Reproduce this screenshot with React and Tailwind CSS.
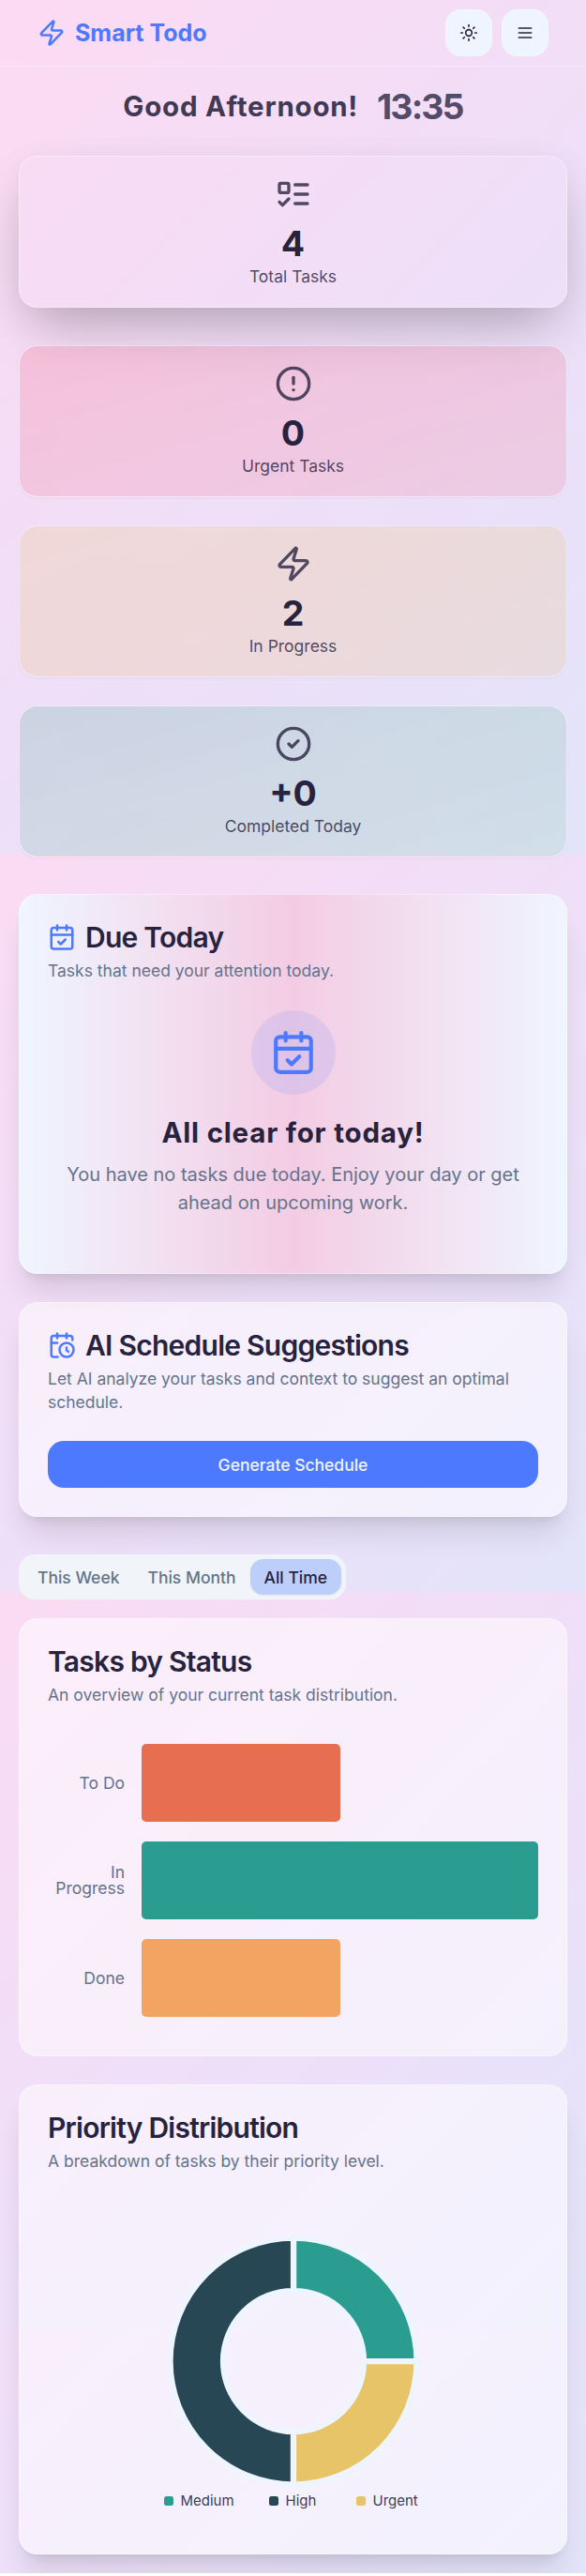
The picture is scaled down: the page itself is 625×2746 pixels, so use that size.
import { Zap, Sun, CircleAlert, CircleCheck, CalendarCheck } from "lucide-react";

function Stroke({ size, className, children }) {
  return (
    <svg
      width={size}
      height={size}
      viewBox="0 0 24 24"
      fill="none"
      stroke="currentColor"
      strokeWidth="2"
      strokeLinecap="round"
      strokeLinejoin="round"
      className={className}
    >
      {children}
    </svg>
  );
}

function ListTodo(props) {
  return (
    <Stroke {...props}>
      <rect x="3" y="5" width="6" height="6" rx="1" />
      <path d="m3 17 2 2 4-4" />
      <path d="M13 6h8" />
      <path d="M13 12h8" />
      <path d="M13 18h8" />
    </Stroke>
  );
}

function MenuIcon(props) {
  return (
    <Stroke {...props}>
      <path d="M4 12h16" />
      <path d="M4 6h16" />
      <path d="M4 18h16" />
    </Stroke>
  );
}

function CalendarClock(props) {
  return (
    <Stroke {...props}>
      <path d="M21 7.5V6a2 2 0 0 0-2-2H5a2 2 0 0 0-2 2v14a2 2 0 0 0 2 2h3.5" />
      <path d="M16 2v4" />
      <path d="M8 2v4" />
      <path d="M3 10h5" />
      <path d="M17.5 17.5 16 16.3V14" />
      <circle cx="16" cy="16" r="6" />
    </Stroke>
  );
}

const stats = [
  {
    icon: ListTodo,
    value: "4",
    label: "Total Tasks",
    tone: "mb-[40px] border-white/40 shadow-[0_31px_62px_-15px_rgba(0,0,0,0.25),0_8px_40px_rgba(0,0,0,0.05)]",
  },
  {
    icon: CircleAlert,
    value: "0",
    label: "Urgent Tasks",
    tone: "mb-[30px] border-white/30 bg-linear-to-br from-[#f43f5e]/17 to-[#f43f5e]/13 bg-clip-padding shadow-[0_1px_3px_rgba(0,0,0,0.05)]",
  },
  {
    icon: Zap,
    value: "2",
    label: "In Progress",
    tone: "mb-[30px] border-white/30 bg-linear-to-br from-[#eab308]/13 to-[#f59e0b]/11 bg-clip-padding shadow-[0_1px_3px_rgba(0,0,0,0.05)]",
  },
  {
    icon: CircleCheck,
    value: "+0",
    label: "Completed Today",
    tone: "mb-[39px] border-white/30 bg-linear-to-br from-[#0e966e]/16 to-[#4dbd6e]/12 bg-clip-padding shadow-[0_1px_3px_rgba(0,0,0,0.05)]",
  },
];

function Stat({ icon: Icon, value, label, tone }) {
  return (
    <div className={"flex h-[162px] flex-col items-center rounded-[20px] border pt-5 " + tone}>
      <Icon size={40} className="text-[#27233f]/80" />
      <div className="mt-2.5 text-[37.5px] leading-[45px] font-bold text-[#27233f]">{value}</div>
      <div className="text-[17.5px] leading-[25px] text-[#27233f]/80">{label}</div>
    </div>
  );
}

function CardHeader({ icon: Icon, title, description }) {
  return (
    <div className="flex flex-col gap-[7.5px]">
      <h2 className="flex h-[30px] items-center gap-2.5 text-[30px] leading-[30px] font-semibold tracking-[-0.75px] text-[#27233f]">
        {Icon && <Icon size={30} className="text-[#4d79ff]" />}
        {title}
      </h2>
      <p className="text-[17.5px] leading-[25px] text-[#64748b]">{description}</p>
    </div>
  );
}

const card = "rounded-[20px] border border-white/40 p-[30px] ";
const raised = "shadow-[0_25px_31px_-6px_rgba(0,0,0,0.1),0_10px_13px_-8px_rgba(0,0,0,0.1)] ";

const bars = [
  { label: "To Do", tone: "w-1/2 bg-[#e76e50]" },
  { label: "In Progress", tone: "w-full bg-[#2a9d90]" },
  { label: "Done", tone: "w-1/2 bg-[#f4a462]" },
];

export default function App() {
  return (
    <div className="flow-root h-[2743px] w-full bg-[linear-gradient(135deg,#fddaf3,#f0dff8_50%,#e3e4fb),linear-gradient(135deg,#fddaf3,#f0dff8_50%,#e3e4fb),linear-gradient(135deg,#fddaf3,#f0dff8_50%,#e3e4fb),linear-gradient(135deg,#fddaf3,#f0dff8_50%,#e3e4fb)] bg-[length:100%_911px] bg-[position:0_0,0_786px,0_1572px,0_1832px] bg-no-repeat font-['Inter',sans-serif] text-[#27233f]">
      <header className="flex h-[71px] items-center justify-between border-b border-white/40 px-10">
        <div className="flex items-center gap-2.5 text-[#4d79ff]">
          <Zap size={30} />
          <span className="text-[25px] leading-[35px] font-bold">Smart Todo</span>
        </div>
        <div className="flex gap-2.5 text-[#27233f]">
          <button className="flex size-[50px] items-center justify-center rounded-[17px] border border-white/40 bg-[#eff5ff]">
            <Sun size={20} />
          </button>
          <button className="flex size-[50px] items-center justify-center rounded-[17px] border border-white/40 bg-[#eff5ff]">
            <MenuIcon size={20} />
          </button>
        </div>
      </header>

      <main className="px-5">
        <div className="flex h-[95px] items-center justify-center gap-5 pb-[10px]">
          <h1 className="text-[29.5px] leading-[37px] font-bold tracking-[0.75px] text-[#27233f]/90">Good Afternoon!</h1>
          <span className="text-[37.5px] leading-[45px] font-bold tracking-[-1.9px] text-[#27233f]/80">13:35</span>
        </div>

        {stats.map((s) => (
          <Stat key={s.label} {...s} />
        ))}

        <section className={card + raised + "mb-[30px] h-[405px] bg-linear-to-r from-[#eff5ff] via-[#f3cce4] to-[#eff5ff]"}>
          <CardHeader icon={CalendarCheck} title="Due Today" description="Tasks that need your attention today." />
          <div className="mt-[30px] flex flex-col items-center text-center">
            <div className="flex size-[90px] items-center justify-center rounded-full bg-[#4d79ff]/12 text-[#4d79ff]">
              <CalendarCheck size={50} />
            </div>
            <h3 className="mt-5 text-[29.5px] leading-10 font-bold tracking-[0.8px]">All clear for today!</h3>
            <p className="mt-2.5 text-[20px] leading-[30px] text-[#64748b]">
              You have no tasks due today. Enjoy your day or get ahead on upcoming work.
            </p>
          </div>
        </section>

        <section className={card + raised + "mb-10 h-[229px] bg-white/50"}>
          <CardHeader
            icon={CalendarClock}
            title="AI Schedule Suggestions"
            description="Let AI analyze your tasks and context to suggest an optimal schedule."
          />
          <button className="mt-[29.5px] h-[50px] w-full rounded-[17px] bg-[#4d79ff] text-[17.5px] leading-[25px] font-medium text-[#eff5ff]">
            Generate Schedule
          </button>
        </section>

        <div className="mb-5 flex h-12 w-fit items-center rounded-[17px] bg-[#f1f5f9] px-[5px] text-[17.5px] leading-[25px] font-medium text-[#64748b]">
          <button className="h-[38px] px-[15px]">This Week</button>
          <button className="h-[38px] px-[15px]">This Month</button>
          <button className="h-[38px] rounded-[14px] bg-[#bdcefb] px-[15px] text-[#27233f] shadow-[0_1px_3px_rgba(0,0,0,0.06)]">All Time</button>
        </div>

        <section className={card + "mb-[30px] h-[467px] bg-white/50"}>
          <CardHeader title="Tasks by Status" description="An overview of your current task distribution." />
          <div className="mt-[30px] flex flex-col gap-[21px] pt-[10px]">
            {bars.map((b) => (
              <div key={b.label} className="flex h-[83px] items-center">
                <div className="w-[82px] text-right text-[17.5px] leading-[17px] text-[#64748b]">{b.label}</div>
                <div className="ml-[18px] h-full grow">
                  <div className={"h-full rounded-[5px] " + b.tone} />
                </div>
              </div>
            ))}
          </div>
        </section>

        <section className={card + raised + "h-[501px] bg-white/50"}>
          <CardHeader title="Priority Distribution" description="A breakdown of tasks by their priority level." />
          <div className="mt-[65px] flex flex-col items-center">
            <svg width="272" height="272" viewBox="-136 -136 272 272" stroke="#eff5ff" strokeWidth="6.25">
              <path fill="#2a9d90" d="M0 -131.5A131.5 131.5 0 0 1 131.5 0H75A75 75 0 0 0 0 -75Z" />
              <path fill="#274754" d="M0 131.5A131.5 131.5 0 0 1 0 -131.5V-75A75 75 0 0 0 0 75Z" />
              <path fill="#e8c468" d="M131.5 0A131.5 131.5 0 0 1 0 131.5V75A75 75 0 0 0 75 0Z" />
            </svg>
            <div className="mt-[3px] flex w-[275px] text-[15px] leading-5 text-[#27233f]/90">
              <div className="flex w-[112px] items-center gap-[7.5px]">
                <span className="size-2.5 rounded-[2.5px] bg-[#2a9d90]" />
                Medium
              </div>
              <div className="flex w-[93px] items-center gap-[7.5px]">
                <span className="size-2.5 rounded-[2.5px] bg-[#274754]" />
                High
              </div>
              <div className="flex items-center gap-[7.5px]">
                <span className="size-2.5 rounded-[2.5px] bg-[#e8c468]" />
                Urgent
              </div>
            </div>
          </div>
        </section>
      </main>
    </div>
  );
}
